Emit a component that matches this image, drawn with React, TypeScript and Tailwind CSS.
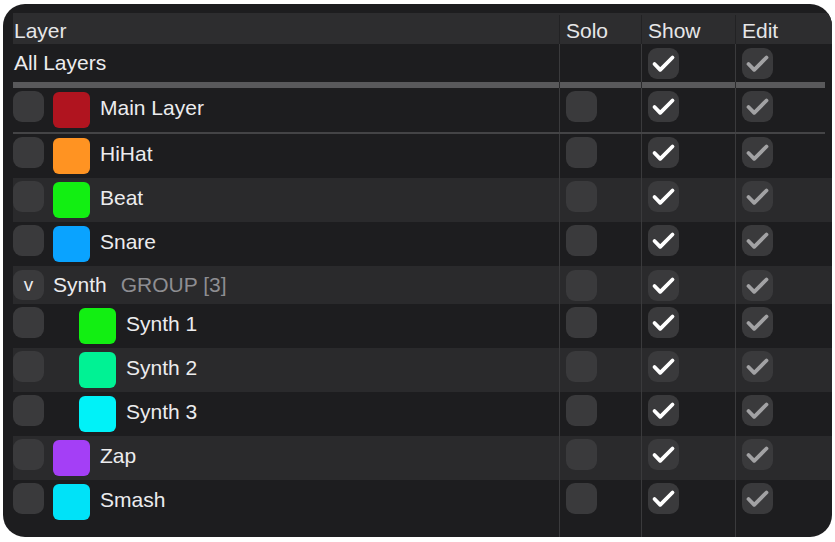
const font = { fontFamily: '"Liberation Sans", Arial, sans-serif' }

type Layer = {
  name: string
  color: string
  indent?: boolean
}

const groupTop: Layer[] = [
  { name: "HiHat", color: "bg-[#ff9322]" },
  { name: "Beat", color: "bg-[#12ef12]" },
  { name: "Snare", color: "bg-[#0aa3ff]" },
]

const synths: Layer[] = [
  { name: "Synth 1", color: "bg-[#12ef12]", indent: true },
  { name: "Synth 2", color: "bg-[#00f294]", indent: true },
  { name: "Synth 3", color: "bg-[#00f2f8]", indent: true },
]

const groupBottom: Layer[] = [
  { name: "Zap", color: "bg-[#a43ff6]" },
  { name: "Smash", color: "bg-[#00e2f8]" },
]

const cols = "grid grid-cols-[546px_82px_94px_90px]"

function Check({ dim }: { dim?: boolean }) {
  return (
    <div className="flex h-[31px] w-[31px] items-center justify-center rounded-[9px] bg-[#3a3a3c]">
      <svg width="31" height="31" viewBox="0 0 31 31">
        <path
          d="M6.5 16 L12.2 21.8 L24.5 9.5"
          fill="none"
          stroke={dim ? "#a2a2a4" : "#ffffff"}
          strokeWidth="3.8"
          strokeLinecap="round"
          strokeLinejoin="round"
        />
      </svg>
    </div>
  )
}

function Box({ className = "" }: { className?: string }) {
  return <div className={`h-[31px] w-[31px] rounded-[9px] bg-[#3a3a3c] ${className}`} />
}

function Cell({ children, className = "" }: { children?: React.ReactNode; className?: string }) {
  return <div className={`flex border-l border-[#3a3a3c] pl-[6px] ${className}`}>{children}</div>
}

function LayerRow({ layer, alt }: { layer: Layer; alt: boolean }) {
  return (
    <div className={`${cols} h-[44px] ${alt ? "bg-[#2a2a2c]" : ""}`}>
      <div className="flex items-start pt-[3px]">
        <Box />
        <div
          className={`mt-[1px] h-[36px] w-[37px] rounded-[6px] ${layer.color} ${layer.indent ? "ml-[35px]" : "ml-[9px]"}`}
        />
        <span className="ml-[10px] pt-[1px] text-[21px] leading-[32px] text-[#ececee]">{layer.name}</span>
      </div>
      <Cell className="items-start pt-[3px]">
        <Box />
      </Cell>
      <Cell className="items-start pt-[3px]">
        <Check />
      </Cell>
      <Cell className="items-start pt-[3px]">
        <Check dim />
      </Cell>
    </div>
  )
}

export default function App() {
  return (
    <div className="h-[542px] w-[835px] bg-white pl-[3px] pt-[4px]" style={font}>
      <div className="flex h-[533px] w-[829px] flex-col overflow-hidden rounded-[22px] bg-[#1d1d1f] pl-[10px] pt-[9px]">
        {/* Header */}
        <div className={`${cols} h-[31px] bg-[#2d2d2f] pt-[2px] text-[21px] text-[#e6e6e8]`}>
          <div className="flex items-center pl-[1px]">Layer</div>
          <div className="flex items-center border-l border-[#222224] pl-[6px]">Solo</div>
          <div className="flex items-center border-l border-[#222224] pl-[6px]">Show</div>
          <div className="flex items-center border-l border-[#222224] pl-[6px]">Edit</div>
        </div>

        {/* All layers */}
        <div className={`${cols} h-[38px]`}>
          <div className="flex items-center pl-[1px] text-[21px] text-[#ececee]">All Layers</div>
          <Cell />
          <Cell className="items-center">
            <Check />
          </Cell>
          <Cell className="items-center">
            <Check dim />
          </Cell>
        </div>

        {/* Thick separator */}
        <div className={`${cols} h-[6px]`}>
          <div className="bg-[#59595b]" />
          <div className="border-l border-[#2a2a2c] bg-[#59595b]" />
          <div className="border-l border-[#2a2a2c] bg-[#59595b]" />
          <div className="border-l border-[#2a2a2c] bg-[#59595b]" />
        </div>

        <LayerRow layer={{ name: "Main Layer", color: "bg-[#b0141f]" }} alt={false} />

        <div className="h-[2px] w-[812px] bg-[#444446]" />

        {groupTop.map((l, i) => (
          <LayerRow key={l.name} layer={l} alt={i % 2 === 1} />
        ))}

        {/* Synth group */}
        <div className={`${cols} h-[38px] bg-[#2a2a2c]`}>
          <div className="flex items-center">
            <div className="flex h-[30px] w-[31px] items-center justify-center rounded-[9px] bg-[#3a3a3c] text-[19px] text-[#ececee]">
              v
            </div>
            <span className="ml-[9px] text-[21px] text-[#ececee]">Synth</span>
            <span className="ml-[14px] text-[21px] text-[#8e8e92]">GROUP [3]</span>
          </div>
          <Cell className="items-center">
            <Box />
          </Cell>
          <Cell className="items-center">
            <Check />
          </Cell>
          <Cell className="items-center">
            <Check dim />
          </Cell>
        </div>

        {synths.map((l, i) => (
          <LayerRow key={l.name} layer={l} alt={i % 2 === 1} />
        ))}

        {groupBottom.map((l, i) => (
          <LayerRow key={l.name} layer={l} alt={i % 2 === 0} />
        ))}

        {/* Filler */}
        <div className={`${cols} flex-1`}>
          <div />
          <Cell />
          <Cell />
          <Cell />
        </div>
      </div>
    </div>
  )
}
